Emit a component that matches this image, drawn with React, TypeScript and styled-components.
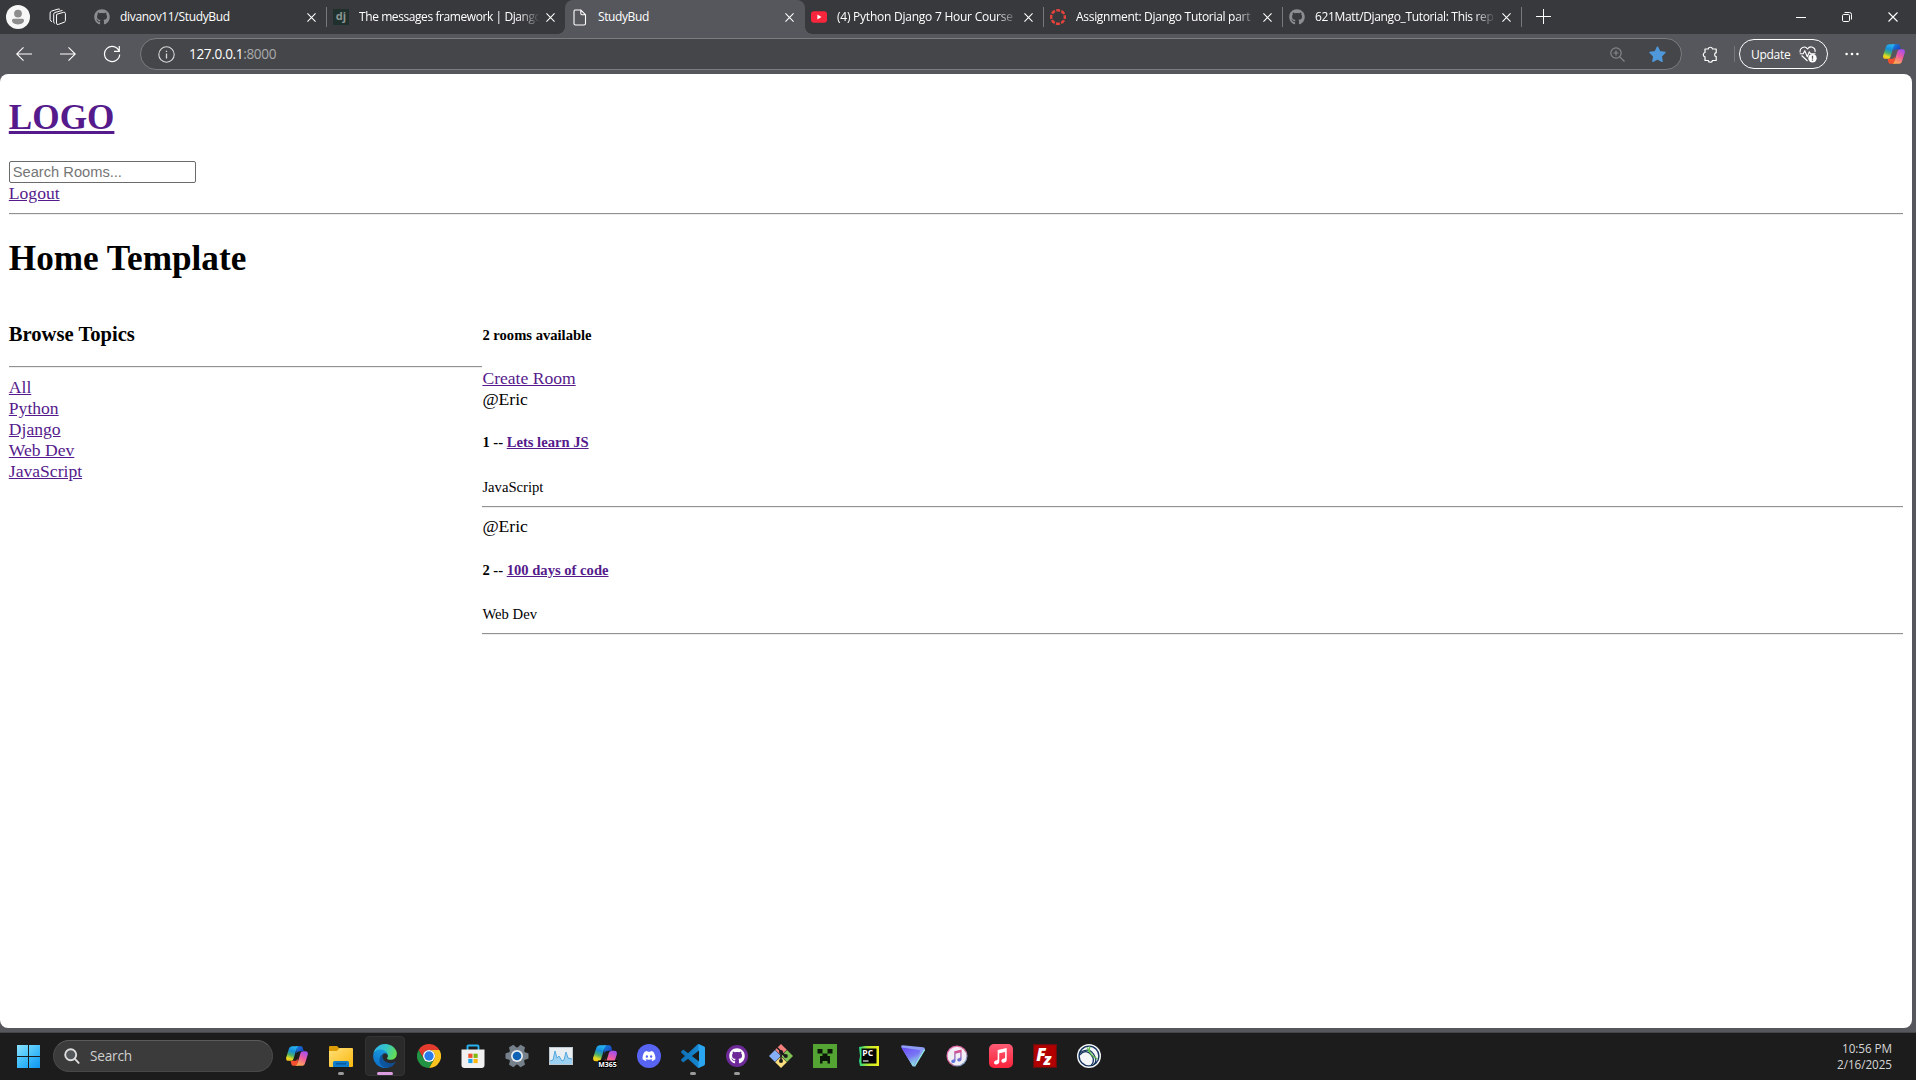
import React from "react";
import styled, { createGlobalStyle, css } from "styled-components";
import { FaGithub, FaDiscord } from "react-icons/fa";

const uiFont = `"Open Sans", "Noto Sans", sans-serif`;
const visited = "#551a8b";

const GlobalStyle = createGlobalStyle`
  * { box-sizing: border-box; }
  html, body { margin: 0; padding: 0; background: #56575c; overflow: hidden; }
  svg { display: block; flex: none; }
`;

const Screen = styled.div`
  width: 1916px;
  height: 1080px;
  display: flex;
  flex-direction: column;
  background: #56575c;
  font-family: ${uiFont};
`;

/* ---------- tab strip ---------- */

const TabStrip = styled.div`
  height: 34px;
  flex: none;
  display: flex;
  align-items: stretch;
  background: #38393c;
  color: #fff;
`;

const StripStart = styled.div`
  width: 87px;
  flex: none;
  display: flex;
  align-items: center;
  padding-left: 6px;
  gap: 19px;
`;

const TabItem = styled.div<{ $active?: boolean; $divider?: boolean }>`
  position: relative;
  width: 239px;
  flex: none;
  display: flex;
  align-items: center;
  padding: 0 7px;
  ${(p) =>
    p.$divider &&
    css`
      background: linear-gradient(#77787b, #77787b) 0 7px / 1px 20px no-repeat;
    `}
  ${(p) =>
    p.$active &&
    css`
      width: 240px;
      margin-right: -1px;
      background: #56575c;
      border-radius: 8px 8px 0 0;
      &::before,
      &::after {
        content: "";
        position: absolute;
        bottom: 0;
        width: 7px;
        height: 7px;
      }
      &::before {
        left: -7px;
        background: radial-gradient(circle at 0 0, transparent 6.5px, #56575c 7px);
      }
      &::after {
        right: -7px;
        background: radial-gradient(circle at 100% 0, transparent 6.5px, #56575c 7px);
      }
    `}
`;

const TabTitle = styled.span<{ $spacing: number; $fade?: boolean }>`
  width: 181px;
  margin-left: 10px;
  margin-right: 6px;
  overflow: hidden;
  white-space: nowrap;
  font-size: 12px;
  line-height: 18px;
  letter-spacing: ${(p) => p.$spacing}px;
  ${(p) => p.$fade && css`mask-image: linear-gradient(90deg, #000 88%, transparent 100%);`}
`;

const DjangoBadge = styled.span`
  width: 16px;
  height: 16px;
  flex: none;
  background: #20312d;
  color: #8b9693;
  font-size: 11px;
  font-weight: 700;
  line-height: 14px;
  text-align: center;
`;

const NewTab = styled.div`
  width: 44px;
  display: flex;
  align-items: center;
  padding: 0 0 1px 15px;
  background: linear-gradient(#77787b, #77787b) 0 7px / 1px 20px no-repeat;
`;

const WindowControls = styled.div`
  margin-left: auto;
  display: flex;
`;

const WindowButton = styled.div`
  width: 46px;
  display: flex;
  align-items: center;
  justify-content: center;
`;

/* ---------- toolbar ---------- */

const Toolbar = styled.div`
  height: 40px;
  flex: none;
  display: flex;
  align-items: center;
  padding: 0 4px 0 2px;
  color: #fff;
`;

const ToolButton = styled.div<{ $w?: number; $shift?: number }>`
  width: ${(p) => p.$w ?? 44}px;
  padding-left: ${(p) => p.$shift ?? 0}px;
  flex: none;
  display: flex;
  justify-content: center;
`;

const AddressBar = styled.div`
  width: 1542px;
  height: 32px;
  flex: none;
  margin-left: 6px;
  display: flex;
  align-items: center;
  padding: 0 15px 0 17px;
  border: 1px solid #7b7c80;
  border-radius: 16px;
  background: #454649;
`;

const Url = styled.span`
  margin-left: 14px;
  margin-right: auto;
  font-size: 13.6px;
  line-height: 20px;
  letter-spacing: -0.35px;
`;

const Port = styled.span`
  color: #a9aaac;
`;

const ToolDivider = styled.div`
  width: 1px;
  height: 16px;
  background: #75767a;
`;

const UpdatePill = styled.div`
  width: 89px;
  height: 30px;
  flex: none;
  margin-left: 4px;
  display: flex;
  align-items: center;
  padding-left: 11px;
  border: 1px solid #fff;
  border-radius: 15px;
  font-size: 12px;
  letter-spacing: -0.3px;
`;

const UpdateLabel = styled.span`
  width: 48px;
`;

/* ---------- web page ---------- */

const Page = styled.main`
  width: 1912px;
  height: 954px;
  flex: none;
  padding: 0.3px 8.8px 0;
  display: flow-root;
  background: #fff;
  color: #000;
  border-radius: 8px;
  font-family: "Liberation Serif", "Times New Roman", serif;
  font-size: 17.6px;
  line-height: 21px;
`;

const Heading = styled.h1<{ $top?: number }>`
  margin: ${(p) => p.$top ?? 23.4}px 0 23.4px;
  font-size: 35.2px;
  line-height: 40px;
  font-weight: 700;
`;

const PageLink = styled.a`
  color: ${visited};
  text-decoration: underline;
`;

const SearchInput = styled.input`
  display: block;
  width: 187px;
  height: 22px;
  margin: 0 0 0.3px;
  padding: 1px 3px;
  border: 1px solid #6b6b6b;
  border-radius: 2px;
  background: #fff;
  font-family: "Liberation Sans", Arial, sans-serif;
  font-size: 14.67px;
  &::placeholder {
    color: #757575;
  }
`;

const Rule = styled.hr<{ $bottom?: number }>`
  height: 2px;
  margin: 8.6px 0 ${(p) => p.$bottom ?? 8.6}px;
  border: 0;
  border-top: 1px solid #929292;
  border-bottom: 1px solid #eee;
`;

const Columns = styled.div`
  display: grid;
  grid-template-columns: 1fr 3fr;
`;

const TopicsTitle = styled.h3`
  margin: 20.6px 0 19.9px;
  font-size: 20.6px;
  line-height: 23px;
`;

const RoomTitle = styled.h5`
  margin: 24.4px 0;
  font-size: 14.6px;
  line-height: 16.8px;
`;

const Line = styled.div`
  height: 21px;
`;

const RoomTopic = styled.small`
  display: block;
  height: 21.4px;
  font-size: 14.67px;
  line-height: 22px;
`;

/* ---------- taskbar ---------- */

const Taskbar = styled.footer`
  height: 48px;
  margin-top: 4px;
  flex: none;
  display: flex;
  align-items: center;
  padding: 0 24px 1px 17px;
  border-top: 1px solid #46464a;
  background: #1c1c1c;
`;

const StartLogo = styled.div`
  display: grid;
  grid-template-columns: 11px 11px;
  grid-auto-rows: 11px;
  gap: 1px;
`;

const StartPane = styled.span<{ $from: string; $to: string }>`
  background: linear-gradient(135deg, ${(p) => p.$from}, ${(p) => p.$to});
`;

const TaskSearch = styled.div`
  width: 220px;
  height: 32px;
  margin: 0 2px 0 13px;
  display: flex;
  align-items: center;
  gap: 10px;
  padding: 0 0 1px 10px;
  border: 1px solid #484848;
  border-top-color: #5c5c5c;
  border-radius: 16px;
  background: #3b3b3b;
  color: #cfcfcf;
  font-size: 13.6px;
  letter-spacing: -0.2px;
`;

const TaskCell = styled.div<{ $focused?: boolean }>`
  position: relative;
  width: 40px;
  height: 40px;
  margin: 0 2px;
  flex: none;
  display: flex;
  align-items: center;
  justify-content: center;
  border-radius: 4px;
  ${(p) => p.$focused && css`background: #2a2a2a; border: 1px solid #333;`}
`;

const RunMark = styled.span<{ $wide?: boolean }>`
  position: absolute;
  left: 50%;
  bottom: ${(p) => (p.$wide ? 0 : 1)}px;
  transform: translateX(-50%);
  width: ${(p) => (p.$wide ? 16 : 6)}px;
  height: 3px;
  border-radius: 2px;
  background: ${(p) => (p.$wide ? "#dc9ee0" : "#9a9a9a")};
`;

const Clock = styled.div`
  margin-left: auto;
  display: flex;
  flex-direction: column;
  align-items: flex-end;
  color: #d6d6d6;
  font-size: 11.7px;
  line-height: 16px;
  letter-spacing: -0.05px;
`;

/* ---------- icons ---------- */

const Cross = ({ size = 9, w = 1.2 }: { size?: number; w?: number }) => (
  <svg width={size} height={size} viewBox="0 0 10 10" stroke="#fff" strokeWidth={w}>
    <path d="M.5 .5 9.5 9.5M9.5 .5 .5 9.5" />
  </svg>
);

const Avatar = () => (
  <svg width="24" height="24" viewBox="0 0 24 24">
    <circle cx="12" cy="12" r="12" fill="#f7f7f7" />
    <circle cx="12" cy="8.6" r="3.9" fill="#8d8d8d" />
    <path d="M6 15.6c0-1 .6-1.8 1.7-1.8h8.6c1.1 0 1.7.8 1.7 1.8 0 2.3-2.5 3.8-6 3.8s-6-1.5-6-3.8z" fill="#8d8d8d" />
  </svg>
);

const Workspaces = () => (
  <svg width="18" height="18" viewBox="0 0 18 18" fill="none" stroke="#fff" strokeWidth="1">
    <path d="M7.6 6.3 14.5 4.3q1.8-.4 1.9 1.3v7q0 1.1-1.1 1.6L9.4 16.4q-1.9.6-1.9-1.2z" />
    <path d="M5.7 15.3q-1-.3-1-1.4V6.2q0-1.3 1.2-1.7L13.5 2.4" />
    <path d="M3 13.6q-1.7-.4-1.9-1.9V5.1q0-1.5 1.4-2L9 1.1q1.5-.4 2 .6" />
  </svg>
);

const FileIcon = () => (
  <svg width="16" height="17" viewBox="0 0 16 17" fill="none" stroke="#fff" strokeWidth="1.1">
    <path d="M3 1h5.8L13.5 5.7V14.5q0 1.5-1.5 1.5H3.5Q2 16 2 14.5V2.5Q2 1 3 1zM8.8 1v3.5q0 1.2 1.2 1.2h3.5" />
  </svg>
);

const YouTube = () => (
  <svg width="16" height="16" viewBox="0 0 16 16">
    <rect y="2.3" width="16" height="11.4" rx="3" fill="#f8263c" />
    <path d="M6.4 5.6v4.8L10.5 8z" fill="#fff" />
  </svg>
);

const Canvas = () => (
  <svg width="16" height="16" viewBox="0 0 16 16" fill="none" stroke="#e5433c">
    <circle cx="8" cy="8" r="6.8" strokeWidth="2.4" strokeDasharray="4 1.34" strokeDashoffset="2" />
  </svg>
);

const Arrow = ({ flip }: { flip?: boolean }) => (
  <svg width="16" height="14" viewBox="0 0 16 14" fill="none" stroke="#fff" strokeWidth="1.1" transform={flip ? "scale(-1 1)" : undefined}>
    <path d="M16 7H.8M7.5 .4.7 7l6.8 6.6" />
  </svg>
);

const Refresh = () => (
  <svg width="18" height="18" viewBox="0 0 18 18" fill="none" stroke="#fff" strokeWidth="1.2">
    <path d="M16.2 6.2A7.6 7.6 0 1 0 16.7 9.5M16.3 1v5.3H11" />
  </svg>
);

const Info = () => (
  <svg width="17" height="17" viewBox="0 0 17 17" fill="none" stroke="#d9d9d9" strokeWidth="1.1">
    <circle cx="8.5" cy="8.5" r="7.7" />
    <path d="M8.5 7.5v5M8.5 4.8v1.3" strokeWidth="1.3" />
  </svg>
);

const Magnify = () => (
  <svg width="15" height="15" viewBox="0 0 15 15" fill="none" stroke="#85868a" strokeWidth="1.2">
    <circle cx="6" cy="6" r="5.2" />
    <path d="M9.8 9.8 14.5 14.5M6 3.5v5M3.5 6h5" />
  </svg>
);

const Star = () => (
  <svg width="17" height="17" viewBox="0 0 24 24" fill="#4f98da" stroke="#4f98da" strokeWidth="2" strokeLinejoin="round">
    <path d="M12 1.5 15.2 8.2 22.6 9.2 17.2 14.3 18.5 21.7 12 18.2 5.5 21.7 6.8 14.3 1.4 9.2 8.8 8.2z" />
  </svg>
);

const Puzzle = () => (
  <svg width="16" height="17" viewBox="0 0 16 17" fill="none" stroke="#fff" strokeWidth="1.2" strokeLinejoin="round">
    <path d="M3 3h3.2a2.2 2.2 0 0 1 4.3 0h3.7v3.7a2 2 0 0 0 0 3.9V14.5h-3.7a2.2 2.2 0 0 1-4.3 0H3v-3.7a2.2 2.2 0 0 1 0-4.3z" />
  </svg>
);

const HeartPulse = () => (
  <svg width="19" height="17" viewBox="0 0 19 17" fill="none" stroke="#fff" strokeWidth="1.1" strokeLinejoin="round">
    <path d="M1.2 6.5C.2 1.5 6-.8 8.5 3 11-.8 17 1 16 6M2.6 9.5 8.5 15M.8 7.7h3.4l1.6-3 2.5 6 2-5 1.2 2h5" />
    <circle cx="13.5" cy="12.3" r="4.2" fill="#fff" stroke="none" />
    <path d="M13.5 9.8v3M13.5 13.6v1.2" stroke="#56575c" strokeWidth="1.3" />
  </svg>
);

const Dots = () => (
  <svg width="14" height="4" viewBox="0 0 14 4" fill="#fff">
    <circle cx="1.6" cy="2" r="1.3" />
    <circle cx="7" cy="2" r="1.3" />
    <circle cx="12.4" cy="2" r="1.3" />
  </svg>
);

const Copilot = ({ id, size = 22, label }: { id: string; size?: number; label?: boolean }) => (
  <svg width={size} height={size} viewBox="0 0 24 24" overflow="visible">
    <defs>
      <linearGradient id={`${id}a`} x1="0.6" y1="0" x2="0.3" y2="1">
        <stop offset="0" stopColor="#28b4f5" />
        <stop offset=".35" stopColor="#168fd8" />
        <stop offset=".62" stopColor="#4cb06a" />
        <stop offset=".85" stopColor="#e5dc20" />
        <stop offset="1" stopColor="#f5c518" />
      </linearGradient>
      <linearGradient id={`${id}b`} x1="0.7" y1="0" x2="0.3" y2="1">
        <stop offset="0" stopColor="#a24ff0" />
        <stop offset=".45" stopColor="#ee5aa0" />
        <stop offset="1" stopColor="#ffb04f" />
      </linearGradient>
      <linearGradient id={`${id}c`} x1="0" y1="0" x2="1" y2="1">
        <stop offset="0" stopColor="#1686e0" />
        <stop offset="1" stopColor="#1b2fb8" />
      </linearGradient>
    </defs>
    <path d="M11 1.3h5c1.3 0 2 .7 2.4 2l.9 3.4H15c-2 0-3 .8-3.6 2.7z" fill={`url(#${id}c)`} />
    <path d="M13 22.7H8.2c-1.3 0-2-.7-2.4-2L5 17.3h4.3c2 0 2.9-.9 3.5-2.7z" fill="#f4502f" />
    <path d="M7.2 1.3H14c-1.4.2-2 1.2-2.5 2.7L8.3 14.6c-.6 1.9-1.6 2.7-3.5 2.7H2.9C.5 17.3-.4 15.7.3 13.3L3.2 4.2C3.8 2.3 5 1.3 7.2 1.3z" fill={`url(#${id}a)`} />
    <path d="M16.8 22.7H10c1.4-.2 2-1.2 2.5-2.7l3.2-10.6c.6-1.9 1.6-2.7 3.5-2.7h1.9c2.4 0 3.3 1.6 2.6 4l-2.9 9.1c-.6 1.9-1.8 2.9-4 2.9z" fill={`url(#${id}b)`} />
    {label && (
      <>
        <rect x="5" y="16.5" width="19" height="7.5" fill="#000" />
        <text x="14.5" y="22.8" fontSize="7" fontWeight="700" textAnchor="middle" fill="#fff" fontFamily="Open Sans">M365</text>
      </>
    )}
  </svg>
);

const SearchGlyph = () => (
  <svg width="16" height="16" viewBox="0 0 16 16" fill="none" stroke="#dedede" strokeWidth="1.9" strokeLinecap="round">
    <circle cx="6.7" cy="6.7" r="5.5" fill="#55585b" />
    <path d="m10.9 10.9 3.7 4" />
  </svg>
);

const Explorer = () => (
  <svg width="24" height="24" viewBox="0 0 24 24">
    <defs>
      <linearGradient id="fold" x1="0" y1="0" x2="1" y2="1">
        <stop offset="0" stopColor="#ffe07a" />
        <stop offset="1" stopColor="#fbb80e" />
      </linearGradient>
    </defs>
    <path d="M0 3q0-1 1-1h7l2.5 2.5V8H0z" fill="#dd9c06" />
    <path d="M0 7h8l2.5-3H23q1 0 1 1v17q0 1-1 1H1q-1 0-1-1z" fill="url(#fold)" />
    <path d="M4 23v-4.5Q4 17 5.5 17h13Q20 17 20 18.5V23z" fill="#0f7ccb" />
    <path d="M7 19.8h10" stroke="#0a4f93" strokeWidth="1.2" />
  </svg>
);

const Edge = () => (
  <svg width="24" height="24" viewBox="0 0 256 259">
    <defs>
      <linearGradient id="eg1" x1="0" x2="1">
        <stop offset="0" stopColor="#0c59a4" />
        <stop offset="1" stopColor="#114a8b" />
      </linearGradient>
      <linearGradient id="eg2" x1=".7" y1="0" x2=".3" y2="1">
        <stop offset="0" stopColor="#1b9de2" />
        <stop offset="1" stopColor="#0b6cc5" />
      </linearGradient>
      <linearGradient id="eg3" x1="0" y1=".3" x2="1" y2=".6">
        <stop offset="0" stopColor="#2fb4ee" />
        <stop offset=".5" stopColor="#35c6c4" />
        <stop offset="1" stopColor="#67e04c" />
      </linearGradient>
    </defs>
    <path fill="url(#eg1)" d="M235.68 195.46a93.73 93.73 0 0 1-10.54 4.71 101.87 101.87 0 0 1-35.9 6.46c-47.32 0-88.54-32.55-88.54-74.32A31.48 31.48 0 0 1 117.13 105c-42.8 1.8-53.8 46.4-53.8 72.53 0 73.88 68.09 81.37 82.76 81.37 7.91 0 19.84-2.3 27-4.56l1.31-.44a128.34 128.34 0 0 0 66.6-52.8 4 4 0 0 0-5.32-5.64z" />
    <path fill="url(#eg2)" d="M105.73 244.42A79.2 79.2 0 0 1 83 223.08a80.72 80.72 0 0 1 29.5-120c3.12-1.47 8.45-4.13 15.54-4a32.35 32.35 0 0 1 25.69 13 31.88 31.88 0 0 1 6.36 18.66c0-.21 24.46-79.6-80-79.6-43.9 0-80 41.66-80 78.21a130.15 130.15 0 0 0 12.11 56 128 128 0 0 0 156.38 67.11 75.55 75.55 0 0 1-62.78-8z" />
    <path fill="url(#eg3)" d="M152.33 148.86c-.81 1.05-3.3 2.5-3.3 5.66 0 2.61 1.7 5.12 4.72 7.23 14.38 10 41.49 8.68 41.56 8.68a59.56 59.56 0 0 0 30.27-8.35A61.38 61.38 0 0 0 256 109.2c.26-22.41-8-37.31-11.34-43.91C223.46 23.84 177.72 0 128 0A128 128 0 0 0 0 126.2c.48-36.54 36.8-66.05 80-66.05 3.5 0 23.46.34 42 10.07 16.34 8.58 24.9 18.94 30.85 29.21 6.18 10.67 7.28 24.15 7.28 29.52s-2.74 13.33-7.8 19.91z" />
  </svg>
);

const Chrome = () => (
  <svg width="24" height="24" viewBox="0 0 24 24">
    <path d="M1.6 6A12 12 0 0 1 22.4 6H12A6 6 0 0 0 6.8 15z" fill="#e33b2e" />
    <path d="M22.4 6A12 12 0 0 1 12 24L17.2 15A6 6 0 0 0 12 6z" fill="#fcc31e" />
    <path d="M12 24A12 12 0 0 1 1.6 6L6.8 15A6 6 0 0 0 17.2 15z" fill="#229342" />
    <circle cx="12" cy="12" r="6" fill="#fff" />
    <circle cx="12" cy="12" r="4.7" fill="#2a7bea" />
  </svg>
);

const Store = () => (
  <svg width="24" height="24" viewBox="0 0 24 24">
    <path d="M6.5 7V2.5Q6.5 1.5 7.5 1.5h9q1 0 1 1V7" fill="none" stroke="#27b1ee" strokeWidth="1.9" />
    <path d="M.5 5.5h23V21q0 3-3 3h-17q-3 0-3-3z" fill="#f1f1f1" />
    <path d="M7.3 9.7h4.2v4.2H7.3z" fill="#f0502a" />
    <path d="M12.5 9.7h4.2v4.2h-4.2z" fill="#80b910" />
    <path d="M7.3 14.9h4.2v4.2H7.3z" fill="#19a2ea" />
    <path d="M12.5 14.9h4.2v4.2h-4.2z" fill="#fcb60c" />
  </svg>
);

const Settings = () => (
  <svg width="24" height="24" viewBox="0 0 24 24">
    <g fill="#75808a">
      <circle cx="12" cy="12" r="8.8" />
      {[0, 60, 120].map((a) => (
        <path key={a} d="M8.6 3 9.5 .5h5L15.4 3v18l-.9 2.5h-5L8.6 21z" transform={`rotate(${a + 30} 12 12)`} />
      ))}
    </g>
    <circle cx="12" cy="12" r="6" fill="#e8edf1" />
    <circle cx="12" cy="12" r="4.3" fill="#0f62b4" />
  </svg>
);

const Monitor = () => (
  <svg width="24" height="18" viewBox="0 0 24 18">
    <rect x=".5" y=".5" width="23" height="17" fill="#e9eef2" stroke="#bfc8cf" />
    <path d="M1 14l3-1 2-9 2 7 2-2 3 5 2-1 2-8 2 6 4 1v5H1z" fill="#9dd1f2" />
    <path d="M1 14l3-1 2-9 2 7 2-2 3 5 2-1 2-8 2 6 4 1" fill="none" stroke="#4aa3dc" strokeWidth=".9" />
  </svg>
);

const Discord = styled.span`
  width: 24px;
  height: 24px;
  display: grid;
  place-items: center;
  border-radius: 50%;
  background: #5865f2;
  color: #fff;
  font-size: 14px;
`;

const GithubDesktop = styled.span`
  width: 22px;
  height: 22px;
  display: grid;
  place-items: center;
  border-radius: 50%;
  background: #6e2a99;
  color: #fff;
  font-size: 16px;
`;

const VsCode = () => (
  <svg width="24" height="24" viewBox="0 0 24 24">
    <defs>
      <linearGradient id="vs">
        <stop offset="0" stopColor="#0f70b4" />
        <stop offset=".7" stopColor="#1586cf" />
        <stop offset=".76" stopColor="#2aa5ef" />
        <stop offset="1" stopColor="#2aa5ef" />
      </linearGradient>
    </defs>
    <path fill="url(#vs)" d="M23.15 2.587L18.21.21a1.494 1.494 0 0 0-1.705.29l-9.46 8.63-4.12-3.128a.999.999 0 0 0-1.276.057L.327 7.261A1 1 0 0 0 .326 8.74L3.899 12 .326 15.26a1 1 0 0 0 .001 1.479L1.65 17.94a.999.999 0 0 0 1.276.057l4.12-3.128 9.46 8.63a1.492 1.492 0 0 0 1.704.29l4.942-2.377A1.5 1.5 0 0 0 24 20.06V3.939a1.5 1.5 0 0 0-.85-1.352zm-5.146 14.861L10.826 12l7.178-5.448v10.896z" />
  </svg>
);

const Git = () => (
  <svg width="24" height="24" viewBox="0 0 24 24">
    <path d="M12 0 17.8 5.8 12 11.6 6.2 5.8z" fill="#f27f7c" />
    <path d="M6 6 11.8 12 6 18 0 12z" fill="#86aef4" />
    <path d="M18 6 24 12 18 18 12.2 12z" fill="#80c355" />
    <path d="M12 12.4 17.8 18.2 12 24 6.2 18.2z" fill="#fbdf7e" />
    <path d="M8 3.5 15.5 11M12 7.5V18M12.5 9.5l4 3" stroke="#1c1c1c" strokeWidth="1.5" />
    <circle cx="12" cy="8" r="2" fill="#1c1c1c" />
    <circle cx="12" cy="17" r="2" fill="#1c1c1c" />
    <circle cx="16.8" cy="12" r="2" fill="#1c1c1c" />
  </svg>
);

const Creeper = () => (
  <svg width="24" height="24" viewBox="0 0 24 24">
    <path d="M0 0h24v24H0z" fill="#53a432" />
    <path d="M4.5 5h5v4.5h-5zM14.5 5h5v4.5h-5zM9.5 9.5h5V12H17v7.5h-2.5V17h-5v2.5H7V12h2.5z" fill="#0c150a" />
  </svg>
);

const PyCharm = () => (
  <svg width="22" height="22" viewBox="0 0 22 22">
    <defs>
      <linearGradient id="pc">
        <stop offset="0" stopColor="#22d88a" />
        <stop offset=".45" stopColor="#b8ea30" />
        <stop offset="1" stopColor="#f2f01c" />
      </linearGradient>
    </defs>
    <path d="M1 2 7 1l14 0v20H2L1 16l1-5z" fill="url(#pc)" />
    <path d="M3.5 3.5h15v15h-15z" fill="#050505" />
    <text x="4.3" y="11" fontSize="8.5" fontWeight="700" fill="#fff" fontFamily="Open Sans">PC</text>
    <path d="M5 16h5.5" stroke="#fff" strokeWidth="1.1" />
  </svg>
);

const Proton = () => (
  <svg width="24" height="24" viewBox="0 0 24 24">
    <defs>
      <linearGradient id="pv" x1=".2" y1="0" x2=".6" y2="1">
        <stop offset="0" stopColor="#6a4ff5" />
        <stop offset=".5" stopColor="#7a78f5" />
        <stop offset="1" stopColor="#8ff0dc" />
      </linearGradient>
    </defs>
    <path d="M.3 3.2Q-.2 1.2 1.9 1.3L22 3.2q2.6.4 1.6 2.7L14.2 21.6q-1.5 2.2-3 0z" fill="#8e9df4" />
    <path d="M.3 3.5 18.5 6q1.5.4.6 1.9L11.9 22.5z" fill="url(#pv)" />
    <path d="M23.7 5.5 13.5 22.3" stroke="#8febdf" strokeWidth="1.3" />
  </svg>
);

const Note = ({ fill }: { fill: string }) => (
  <path
    fill={fill}
    d="M9 6.7 17 4.9V15.3c0 1.5-1 2.4-2.5 2.6-1.4.2-2.3-.6-2.2-1.7.1-1.2 1.1-1.8 2.3-2 .8-.2 1-.4 1-1.1V8.3l-5.2 1.2v7.4c0 1.5-1 2.4-2.4 2.6-1.4.2-2.3-.6-2.2-1.7.1-1.2 1.1-1.8 2.2-2 .8-.1 1-.5 1-1.1z"
  />
);

const ITunes = () => (
  <svg width="22" height="22" viewBox="0 0 24 24">
    <defs>
      <linearGradient id="it1" x1="0" y1="0" x2="1" y2="1">
        <stop offset="0" stopColor="#f583d5" />
        <stop offset=".5" stopColor="#d05a86" />
        <stop offset="1" stopColor="#58c8ef" />
      </linearGradient>
      <linearGradient id="it2" x1="0" y1="0" x2="0" y2="1">
        <stop offset="0" stopColor="#e94b86" />
        <stop offset="1" stopColor="#4d7bea" />
      </linearGradient>
    </defs>
    <circle cx="12" cy="12" r="11.5" fill="url(#it1)" />
    <circle cx="12" cy="12" r="10.2" fill="#f0edf5" />
    <Note fill="url(#it2)" />
  </svg>
);

const Music = () => (
  <svg width="24" height="24" viewBox="0 0 24 24">
    <defs>
      <linearGradient id="am" x1="0" y1="0" x2="0" y2="1">
        <stop offset="0" stopColor="#fb5c74" />
        <stop offset="1" stopColor="#fa233b" />
      </linearGradient>
    </defs>
    <rect width="24" height="24" rx="5" fill="url(#am)" />
    <g transform="translate(-1.5 -1.5) scale(1.13)">
      <Note fill="#fff" />
    </g>
  </svg>
);

const FileZilla = () => (
  <svg width="24" height="24" viewBox="0 0 24 24" overflow="visible">
    <rect x=".7" y=".7" width="22.6" height="22.6" fill="#b20000" stroke="#7d0a0a" strokeWidth="1.4" strokeDasharray="1.5 1" />
    <text x="3.2" y="16.5" fontSize="17" fontWeight="800" fontStyle="italic" fill="#fff" fontFamily="Open Sans">F</text>
    <text x="10.5" y="20.5" fontSize="16" fontWeight="800" fontStyle="italic" fill="#fff" fontFamily="Open Sans">z</text>
  </svg>
);

const Globe = () => (
  <svg width="24" height="24" viewBox="0 0 24 24" fill="none">
    <circle cx="12" cy="12" r="12" fill="#f4f6f8" />
    <circle cx="12" cy="12" r="9.9" stroke="#15345c" strokeWidth="1.4" />
    <path d="M3 8.5Q12 3 16.5 10T17 20.5M2.5 11Q9 4.5 14 10.5T14 21.5" stroke="#15345c" strokeWidth="1.3" />
    <path d="M10.5 3.5Q11.5 10 20.5 15M13 2.5Q10.5 8 17 13" stroke="#5fc04a" strokeWidth="1.2" />
  </svg>
);

/* ---------- data ---------- */

type TabInfo = { title: string; icon: React.ReactNode; spacing: number; active?: boolean; divider?: boolean; fade?: boolean };

const gh = <FaGithub size={16} color="#8c8d90" />;

const tabs: TabInfo[] = [
  { title: "divanov11/StudyBud", icon: gh, spacing: -0.33 },
  { title: "The messages framework | Django", icon: <DjangoBadge>dj</DjangoBadge>, spacing: -0.42, divider: true, fade: true },
  { title: "StudyBud", icon: <FileIcon />, spacing: -0.4, active: true },
  { title: "(4) Python Django 7 Hour Course", icon: <YouTube />, spacing: -0.24, fade: true },
  { title: "Assignment: Django Tutorial part", icon: <Canvas />, spacing: -0.3, divider: true, fade: true },
  { title: "621Matt/Django_Tutorial: This rep", icon: gh, spacing: -0.35, divider: true, fade: true },
];

const topics = ["All", "Python", "Django", "Web Dev", "JavaScript"];

const rooms = [
  { id: 1, host: "Eric", name: "Lets learn JS", topic: "JavaScript" },
  { id: 2, host: "Eric", name: "100 days of code", topic: "Web Dev" },
];

const apps: { key: string; icon: React.ReactNode; state?: "open" | "focused" }[] = [
  { key: "copilot", icon: <Copilot id="tc" size={22} /> },
  { key: "explorer", icon: <Explorer />, state: "open" },
  { key: "edge", icon: <Edge />, state: "focused" },
  { key: "chrome", icon: <Chrome /> },
  { key: "store", icon: <Store /> },
  { key: "settings", icon: <Settings /> },
  { key: "monitor", icon: <Monitor /> },
  { key: "m365", icon: <Copilot id="tm" size={24} label /> },
  { key: "discord", icon: <Discord><FaDiscord /></Discord> },
  { key: "vscode", icon: <VsCode />, state: "open" },
  { key: "github", icon: <GithubDesktop><FaGithub /></GithubDesktop>, state: "open" },
  { key: "git", icon: <Git /> },
  { key: "minecraft", icon: <Creeper /> },
  { key: "pycharm", icon: <PyCharm /> },
  { key: "proton", icon: <Proton /> },
  { key: "itunes", icon: <ITunes /> },
  { key: "music", icon: <Music /> },
  { key: "filezilla", icon: <FileZilla /> },
  { key: "globe", icon: <Globe /> },
];

export default function App() {
  return (
    <Screen>
      <GlobalStyle />
      <TabStrip>
        <StripStart>
          <Avatar />
          <Workspaces />
        </StripStart>
        {tabs.map((t) => (
          <TabItem key={t.title} $active={t.active} $divider={t.divider}>
            {t.icon}
            <TabTitle $spacing={t.spacing} $fade={t.fade}>{t.title}</TabTitle>
            <Cross />
          </TabItem>
        ))}
        <NewTab>
          <svg width="15" height="15" viewBox="0 0 15 15" stroke="#fff" strokeWidth="1"><path d="M7.5 0v15M0 7.5h15" /></svg>
        </NewTab>
        <WindowControls>
          <WindowButton><svg width="10" height="10" viewBox="0 0 10 10" stroke="#fff"><path d="M0 5.5h10" /></svg></WindowButton>
          <WindowButton>
            <svg width="10" height="10" viewBox="0 0 10 10" fill="none" stroke="#fff">
              <rect x=".5" y="2.5" width="7" height="7" rx="1.2" />
              <path d="M2.5 .5h5q2 0 2 2v5" />
            </svg>
          </WindowButton>
          <WindowButton><Cross size={10} w={1.1} /></WindowButton>
        </WindowControls>
      </TabStrip>

      <Toolbar>
        <ToolButton><Arrow /></ToolButton>
        <ToolButton><Arrow flip /></ToolButton>
        <ToolButton><Refresh /></ToolButton>
        <AddressBar>
          <Info />
          <Url>127.0.0.1<Port>:8000</Port></Url>
          <ToolButton $w={64}><Magnify /></ToolButton>
          <Star />
        </AddressBar>
        <ToolButton $w={52} $shift={4}><Puzzle /></ToolButton>
        <ToolDivider />
        <UpdatePill>
          <UpdateLabel>Update</UpdateLabel>
          <HeartPulse />
        </UpdatePill>
        <ToolButton $w={48}><Dots /></ToolButton>
        <ToolButton $w={36}><Copilot id="ec" size={22} /></ToolButton>
      </Toolbar>

      <Page>
        <Heading><PageLink>LOGO</PageLink></Heading>
        <SearchInput type="text" placeholder="Search Rooms..." />
        <Line><PageLink>Logout</PageLink></Line>
        <Rule />
        <Heading $top={24.1}>Home Template</Heading>
        <Columns>
          <div>
            <TopicsTitle>Browse Topics</TopicsTitle>
            <Rule $bottom={8.9} />
            {topics.map((t) => (
              <Line key={t}><PageLink>{t}</PageLink></Line>
            ))}
          </div>
          <div>
            <RoomTitle>2 rooms available</RoomTitle>
            <Line><PageLink>Create Room</PageLink></Line>
            {rooms.map((r) => (
              <div key={r.id}>
                <Line>@{r.host}</Line>
                <RoomTitle>{r.id} -- <PageLink>{r.name}</PageLink></RoomTitle>
                <RoomTopic>{r.topic}</RoomTopic>
                <Rule />
              </div>
            ))}
          </div>
        </Columns>
      </Page>

      <Taskbar>
        <StartLogo>
          <StartPane $from="#8be0ff" $to="#45c4fb" />
          <StartPane $from="#6ad4fd" $to="#2bb0f8" />
          <StartPane $from="#55ccfd" $to="#22a8f5" />
          <StartPane $from="#3abcfb" $to="#0f95ef" />
        </StartLogo>
        <TaskSearch><SearchGlyph />Search</TaskSearch>
        {apps.map((a) => (
          <TaskCell key={a.key} $focused={a.state === "focused"}>
            {a.icon}
            {a.state && <RunMark $wide={a.state === "focused"} />}
          </TaskCell>
        ))}
        <Clock>
          <span>10:56 PM</span>
          <span>2/16/2025</span>
        </Clock>
      </Taskbar>
    </Screen>
  );
}
